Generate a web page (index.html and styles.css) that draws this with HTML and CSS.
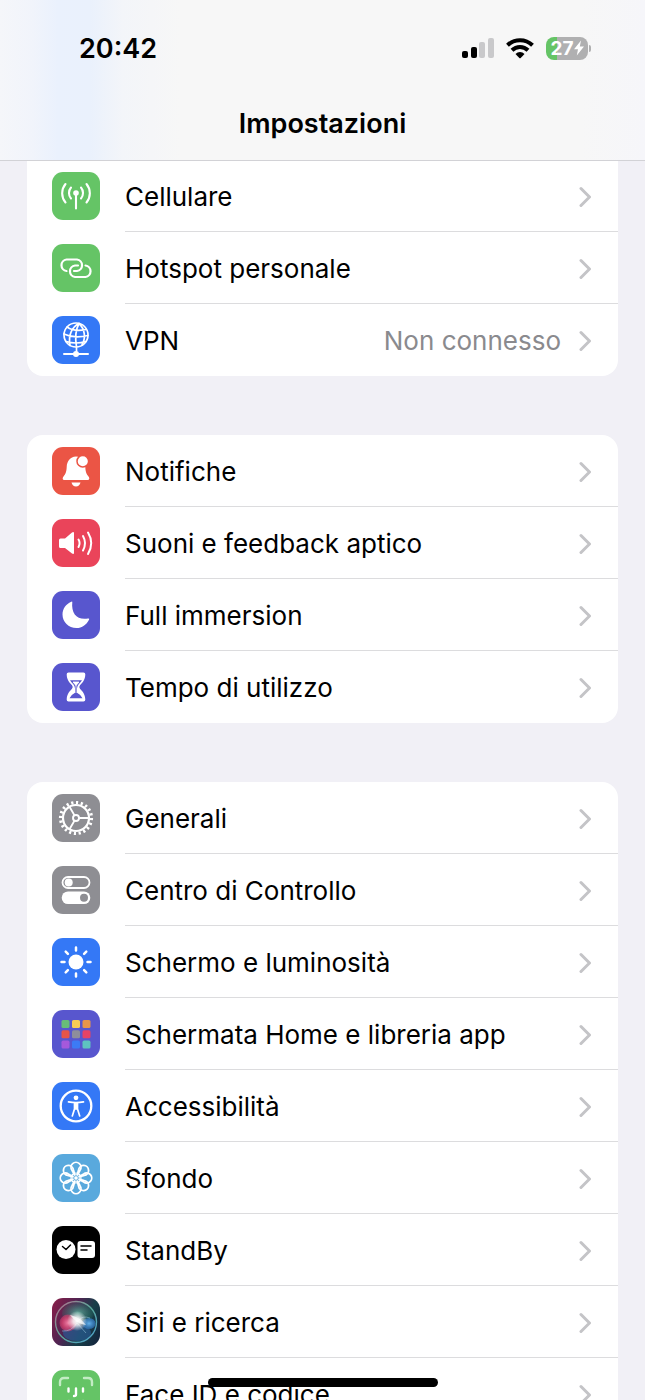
FILE: index.html
```html
<!DOCTYPE html>
<html lang="it">
<head>
  <meta charset="UTF-8">
  <meta name="viewport" content="width=device-width, initial-scale=1.0">
  <title>Impostazioni</title>
  <link rel="stylesheet" href="styles.css">
</head>
<body>
  <svg class="defs" aria-hidden="true">
    <symbol id="chevron" viewBox="0 0 13 22">
      <path d="M2 2.5 10.5 11 2 19.5" fill="none" stroke="currentColor" stroke-width="3" stroke-linecap="round" stroke-linejoin="round"/>
    </symbol>
  </svg>

  <div class="screen">
    <header class="top-bar">
      <div class="status">
        <time class="clock">20:42</time>
        <div class="indicators">
          <svg class="signal" viewBox="0 0 33 22" aria-hidden="true">
            <rect x="1" y="14" width="6" height="7" rx="2"/>
            <rect x="10" y="10" width="6" height="11" rx="2"/>
            <rect x="18" y="5" width="6" height="16" rx="2" fill="#c9c9cb"/>
            <rect x="27" y="1" width="6" height="20" rx="2" fill="#c9c9cb"/>
          </svg>
          <svg class="wifi" viewBox="0 0 28 22" aria-hidden="true">
            <g fill="none" stroke="#000" stroke-width="4">
              <path d="M1.5 8.2a18 18 0 0 1 25 0"/>
              <path d="M6 13.2a11.5 11.5 0 0 1 16 0"/>
            </g>
            <path d="M9.5 16.9a6.5 6.5 0 0 1 9 0L14.7 21q-.7.6-1.400 0z"/>
          </svg>
          <div class="battery">
            <span class="battery-level">27</span>
            <svg class="bolt" viewBox="0 0 10 16" aria-hidden="true"><path d="M7 .5 0 9.300H4L2.800 15.500 10 6.500H5.800z" fill="#fff"/></svg>
          </div>
        </div>
      </div>
      <h1 class="title">Impostazioni</h1>
    </header>

    <main class="settings">
      <nav class="group group-first">
        <a class="row" href="#cellulare">
          <svg class="icon green" viewBox="0 0 48 48" aria-hidden="true">
            <g fill="none" stroke="#fff" stroke-width="2.1" stroke-linecap="round">
              <path d="M24 21v15.500M19 15.500a8.500 8.500 0 0 0 0 11M29 15.500a8.500 8.500 0 0 1 0 11M13.500 12a14.500 14.500 0 0 0 0 18.500M34.500 12a14.500 14.500 0 0 1 0 18.500"/>
            </g>
            <circle cx="24" cy="21" r="2.800" fill="#fff"/>
          </svg>
          <span class="content"><span class="label">Cellulare</span><svg class="chevron"><use href="#chevron"/></svg></span>
        </a>
        <a class="row" href="#hotspot">
          <svg class="icon green" viewBox="0 0 48 48" aria-hidden="true">
            <g fill="none" stroke="#fff" stroke-width="2.2" stroke-linecap="round">
              <path d="M14.500 27a5.800 5.800 0 0 1 0-11.500H25a5.800 5.800 0 0 1 0 11.500h-3"/>
              <path d="M26 21.500h-3a5.800 5.800 0 0 0 0 11.500h10.500a5.800 5.800 0 0 0 0-11.500"/>
            </g>
          </svg>
          <span class="content"><span class="label">Hotspot personale</span><svg class="chevron"><use href="#chevron"/></svg></span>
        </a>
        <a class="row" href="#vpn">
          <svg class="icon blue" viewBox="0 0 48 48" aria-hidden="true">
            <g fill="none" stroke="#fff" stroke-width="1.700" stroke-linecap="round">
              <circle cx="24" cy="19" r="12"/>
              <path d="M27 7.500C20 11 16 19 18 29.500M27 7.500C24 13 23 22 24.500 31M27 7.500C33 13 34 22 30 29M15 11q7 5 19 2.500M12 18q10 5 24 1.500M14 25.500q10 3 20 0M24.500 31v4"/>
              <path d="M12 38h24" stroke-width="2"/>
            </g>
            <circle cx="24" cy="38" r="3" fill="#fff"/>
          </svg>
          <span class="content"><span class="label">VPN</span><span class="value">Non connesso</span><svg class="chevron"><use href="#chevron"/></svg></span>
        </a>
      </nav>

      <nav class="group">
        <a class="row" href="#notifiche">
          <svg class="icon red" viewBox="0 0 48 48" aria-hidden="true">
            <path d="M24 9.500c-6 .5-9 4.500-9.300 10.500-.2 5-1.200 7-3.200 9.500-1.500 2-.7 3.500 1 3.500h23c1.700 0 2.500-1.500 1-3.500-2-2.500-3-4.500-3.200-9.500C33 13.500 30 10 24 9.500z" fill="#fff"/>
            <path d="M19.500 35.500h9c-.7 2.500-2.300 4-4.500 4s-3.800-1.500-4.500-4z" fill="#fff"/>
            <circle cx="30.800" cy="14.200" r="5.800" fill="#fff" stroke="#eb5545" stroke-width="1.500"/>
          </svg>
          <span class="content"><span class="label">Notifiche</span><svg class="chevron"><use href="#chevron"/></svg></span>
        </a>
        <a class="row" href="#suoni">
          <svg class="icon pink" viewBox="0 0 48 48" aria-hidden="true">
            <path d="M8.500 19.500H13l7-6q2-1.200 2 .8v19.500q0 2-2 .8l-7-5.600H8.500Q7 29 7 27.500v-6.500q0-1.500 1.500-1.500z" fill="#fff"/>
            <g fill="none" stroke="#fff" stroke-width="2" stroke-linecap="round">
              <path d="M26.500 20.500q2.200 3.700 0 7.500M31 17q4 7 0 14.500M36 13.500q6.500 10.700 0 21.500"/>
            </g>
          </svg>
          <span class="content"><span class="label">Suoni e feedback aptico</span><svg class="chevron"><use href="#chevron"/></svg></span>
        </a>
        <a class="row" href="#full-immersion">
          <svg class="icon indigo" viewBox="0 0 48 48" aria-hidden="true">
            <path d="M20.300 11C19 23 25.500 29.500 36 27.500q1.700-.3 1 1.200C34.500 33.700 30 37 24.500 37 16.500 37 10.500 31 10.500 23.500c0-5.500 3.500-10.500 8.700-12.700q1.300-.5 1.100.2z" fill="#fff"/>
          </svg>
          <span class="content"><span class="label">Full immersion</span><svg class="chevron"><use href="#chevron"/></svg></span>
        </a>
        <a class="row" href="#tempo">
          <svg class="icon indigo" viewBox="0 0 48 48" aria-hidden="true">
            <path d="M16.500 9.500h15q1.800 0 1.800 1.800c0 5.600-3 8.600-5.300 11q-1.500 1.700 0 3.400c2.300 2.400 5.300 5.400 5.300 11q0 1.800-1.800 1.800h-15q-1.800 0-1.800-1.800c0-5.600 3-8.600 5.300-11q1.500-1.700 0-3.400c-2.300-2.400-5.300-5.400-5.300-11q0-1.800 1.800-1.800z" fill="#fff"/>
            <path d="M18 17.300h12q-1.200 2-3.300 4-1.700 2-1.700 4v4.500q4 2 5.500 5.500h-13q1.500-3.500 5.500-5.500v-4.500q0-2-1.700-4-2.100-2-3.300-4z" fill="#5856ce"/>
            <path d="M21 19h6L24 22.500zM24 21v9" fill="#fff" stroke="#fff" stroke-width=".8"/>
          </svg>
          <span class="content"><span class="label">Tempo di utilizzo</span><svg class="chevron"><use href="#chevron"/></svg></span>
        </a>
      </nav>

      <nav class="group">
        <a class="row" href="#generali">
          <svg class="icon gray" viewBox="0 0 48 48" aria-hidden="true">
            <g fill="none" stroke="#fff">
              <circle cx="24" cy="24" r="15.500" stroke-width="3.200" pathLength="40" stroke-dasharray=".9 1.100"/>
              <circle cx="24" cy="24" r="13" stroke-width="2.200"/>
              <circle cx="24" cy="24" r="3" stroke-width="1.900"/>
              <path d="M27 24h10M22.500 21.400 17.500 12.700M22.500 26.600 17.500 35.300" stroke-width="1.900"/>
            </g>
          </svg>
          <span class="content"><span class="label">Generali</span><svg class="chevron"><use href="#chevron"/></svg></span>
        </a>
        <a class="row" href="#centro-di-controllo">
          <svg class="icon gray" viewBox="0 0 48 48" aria-hidden="true">
            <rect x="10.500" y="11" width="27" height="11" rx="5.500" fill="none" stroke="#fff" stroke-width="1.800"/>
            <circle cx="16.700" cy="16.500" r="4" fill="#fff"/>
            <rect x="9.700" y="25.500" width="28.600" height="12.600" rx="6.300" fill="#fff"/>
            <circle cx="32" cy="31.800" r="4" fill="#8e8e93"/>
          </svg>
          <span class="content"><span class="label">Centro di Controllo</span><svg class="chevron"><use href="#chevron"/></svg></span>
        </a>
        <a class="row" href="#schermo">
          <svg class="icon blue" viewBox="0 0 48 48" aria-hidden="true">
            <circle cx="24" cy="24" r="7.500" fill="#fff"/>
            <path d="M24 9.500v3M24 35.500v3M9.500 24h3M35.500 24h3M13.700 13.700l2.200 2.200M32.100 32.100l2.200 2.200M13.700 34.300l2.200-2.200M32.100 15.900l2.200-2.200" stroke="#fff" stroke-width="2.500" stroke-linecap="round"/>
          </svg>
          <span class="content"><span class="label">Schermo e luminosità</span><svg class="chevron"><use href="#chevron"/></svg></span>
        </a>
        <a class="row" href="#schermata-home">
          <svg class="icon indigo" viewBox="0 0 48 48" aria-hidden="true">
            <rect x="9.500" y="10" width="8" height="8" rx="1.600" fill="#68bd78"/>
            <rect x="20" y="10" width="8" height="8" rx="1.600" fill="#f7ca54"/>
            <rect x="30.500" y="10" width="8" height="8" rx="1.600" fill="#e8964b"/>
            <rect x="9.500" y="20.300" width="8" height="8" rx="1.600" fill="#e75547"/>
            <rect x="20" y="20.300" width="8" height="8" rx="1.600" fill="#8e8e9b"/>
            <rect x="30.500" y="20.300" width="8" height="8" rx="1.600" fill="#e54365"/>
            <rect x="9.500" y="30.600" width="8" height="8" rx="1.600" fill="#a559db"/>
            <rect x="20" y="30.600" width="8" height="8" rx="1.600" fill="#3c7bf5"/>
            <rect x="30.500" y="30.600" width="8" height="8" rx="1.600" fill="#5ec3c0"/>
          </svg>
          <span class="content"><span class="label">Schermata Home e libreria app</span><svg class="chevron"><use href="#chevron"/></svg></span>
        </a>
        <a class="row" href="#accessibilita">
          <svg class="icon blue" viewBox="0 0 48 48" aria-hidden="true">
            <circle cx="24" cy="24" r="15.300" fill="none" stroke="#fff" stroke-width="2.300"/>
            <circle cx="24" cy="15.800" r="2.400" fill="#fff"/>
            <path d="M16.500 19.800q7.500 1.400 15 0M22.500 21v6l-2.200 7M25.500 21v6l2.200 7" fill="none" stroke="#fff" stroke-width="1.700" stroke-linecap="round" stroke-linejoin="round"/>
            <path d="M22 20.500h4v6.500l-2 1-2-1z" fill="#fff"/>
          </svg>
          <span class="content"><span class="label">Accessibilità</span><svg class="chevron"><use href="#chevron"/></svg></span>
        </a>
        <a class="row" href="#sfondo">
          <svg class="icon sky" viewBox="0 0 48 48" aria-hidden="true">
            <defs>
              <path id="petal" d="M24 23.500 20 16.300a5 5 0 1 1 8 0z"/>
            </defs>
            <g fill="none" stroke="#fff" stroke-width="1.800" stroke-linejoin="round">
              <use href="#petal"/>
              <use href="#petal" transform="rotate(45 24 24)"/>
              <use href="#petal" transform="rotate(90 24 24)"/>
              <use href="#petal" transform="rotate(135 24 24)"/>
              <use href="#petal" transform="rotate(180 24 24)"/>
              <use href="#petal" transform="rotate(225 24 24)"/>
              <use href="#petal" transform="rotate(270 24 24)"/>
              <use href="#petal" transform="rotate(315 24 24)"/>
              <circle cx="24" cy="24" r="5" stroke-width="1.200"/>
            </g>
            <circle cx="24" cy="24" r="2.300" fill="#fff" stroke="#59a9dd"/>
          </svg>
          <span class="content"><span class="label">Sfondo</span><svg class="chevron"><use href="#chevron"/></svg></span>
        </a>
        <a class="row" href="#standby">
          <svg class="icon black" viewBox="0 0 48 48" aria-hidden="true">
            <circle cx="14" cy="23.500" r="9.500" fill="#fff"/>
            <rect x="25.500" y="15" width="17.500" height="17" rx="3" fill="#fff"/>
            <path d="M10.500 20.500l3.500 3 4.500-4.500M29 20h10M29 24h6" fill="none" stroke="#000" stroke-width="1.500" stroke-linecap="round" stroke-linejoin="round"/>
          </svg>
          <span class="content"><span class="label">StandBy</span><svg class="chevron"><use href="#chevron"/></svg></span>
        </a>
        <a class="row" href="#siri">
          <svg class="icon siri" viewBox="0 0 48 48" aria-hidden="true">
            <defs>
              <linearGradient id="siri-ring" x1="0" y1="0" x2="1" y2="1">
                <stop offset="0" stop-color="#b56c8a"/>
                <stop offset=".5" stop-color="#5ba99a"/>
                <stop offset="1" stop-color="#4c9fd0"/>
              </linearGradient>
              <radialGradient id="siri-pink">
                <stop offset="0" stop-color="#ee7fa5"/>
                <stop offset=".7" stop-color="#d9406f" stop-opacity=".8"/>
                <stop offset="1" stop-color="#d9406f" stop-opacity=".5"/>
              </radialGradient>
              <radialGradient id="siri-green">
                <stop offset="0" stop-color="#5fae9b" stop-opacity=".9"/>
                <stop offset="1" stop-color="#2c7a69" stop-opacity=".2"/>
              </radialGradient>
              <radialGradient id="siri-blue">
                <stop offset="0" stop-color="#63b0ea"/>
                <stop offset="1" stop-color="#2f74bd" stop-opacity=".7"/>
              </radialGradient>
              <radialGradient id="siri-glow">
                <stop offset="0" stop-color="#fff"/>
                <stop offset=".4" stop-color="#fff" stop-opacity=".8"/>
                <stop offset="1" stop-color="#fff" stop-opacity="0"/>
              </radialGradient>
            </defs>
            <ellipse cx="26" cy="15" rx="16" ry="11" fill="url(#siri-green)"/>
            <ellipse cx="25" cy="35" rx="14" ry="8" fill="#2b5f9e" opacity=".6"/>
            <circle cx="16" cy="25" r="8.500" fill="url(#siri-pink)"/>
            <ellipse cx="37" cy="25.500" rx="6.500" ry="5.500" fill="url(#siri-blue)"/>
            <path d="M10 33q9 1 15-8l9 10M26 23q4-6 12-3" fill="none" stroke="#9ecbe6" opacity=".5"/>
            <circle cx="25" cy="23" r="10" fill="url(#siri-glow)"/>
            <path d="M18 17q10 2 16 10-9-1-16-10z" fill="#fff" opacity=".7"/>
            <circle cx="24" cy="24" r="20.500" fill="none" stroke="url(#siri-ring)" stroke-width="1.400"/>
          </svg>
          <span class="content"><span class="label">Siri e ricerca</span><svg class="chevron"><use href="#chevron"/></svg></span>
        </a>
        <a class="row" href="#face-id">
          <svg class="icon green" viewBox="0 0 48 48" aria-hidden="true">
            <g fill="none" stroke="#fff" stroke-width="2.400" stroke-linecap="round">
              <path d="M8 15v-3q0-4 4-4h4M32 8h4q4 0 4 4v3M8 33v3q0 4 4 4h4M32 40h4q4 0 4-4v-3" stroke="#c3ecc4"/>
              <path d="M16.500 18.500v3M31 18.500v3M24 18.500v6q0 1.500-2 1.500M17 31q7 5 14 0"/>
            </g>
          </svg>
          <span class="content"><span class="label">Face ID e codice</span><svg class="chevron"><use href="#chevron"/></svg></span>
        </a>
      </nav>
    </main>
    <div class="home-indicator"></div>
  </div>
</body>
</html>
```
FILE: styles.css
```css
* {
  box-sizing: border-box;
}

body {
  margin: 0;
  background: #f1f0f6;
  color: #000;
  font-family: Inter, "Liberation Sans", sans-serif;
  font-size: 26px;
}

.defs {
  position: absolute;
  width: 0;
  height: 0;
}

.screen {
  display: flex;
  flex-direction: column;
  height: 100vh;
  overflow: hidden;
}

/* Status bar and title, the list scrolls underneath */
.top-bar {
  z-index: 1;
  flex: none;
  margin-bottom: -1px;
  padding: 28px 54px 8px 79px;
  border-bottom: 1px solid #d2d2d6;
  background: linear-gradient(90deg, #f5f6fa 0%, #f1f4fb 5%, #eaf1fd 9%, #eaf1fc 14%, #f3f5f9 19%, #f7f7f7 28%, #f7f7f7 90%, #f6f6fa 100%);
}

.status {
  display: flex;
  align-items: center;
  justify-content: space-between;
  height: 40px;
}

.clock {
  font-size: 27px;
  font-weight: 600;
}

.indicators {
  display: flex;
  align-items: center;
  gap: 12px;
}

.signal {
  width: 33px;
  height: 22px;
}

.wifi {
  width: 28px;
  height: 22px;
}

.battery {
  position: relative;
  display: flex;
  align-items: center;
  justify-content: center;
  width: 42px;
  height: 23px;
  margin-right: 3px;
  border-radius: 8px;
  background: linear-gradient(90deg, #65c466 27%, #b0b0b1 27%);
  color: #fff;
}

.battery::after {
  content: "";
  position: absolute;
  right: -3px;
  top: 8px;
  width: 2px;
  height: 7px;
  border-radius: 0 3px 3px 0;
  background: #b0b0b1;
}

.battery-level {
  font-size: 19px;
  font-weight: 700;
  line-height: 23px;
}

.bolt {
  width: 10px;
  height: 16px;
}

.title {
  margin: 28px 0 0;
  padding-right: 25px;
  font-size: 27px;
  font-weight: 600;
  line-height: 56px;
  text-align: center;
}

/* Grouped list */
.settings {
  flex: 1;
  min-height: 0;
  padding: 0 27px;
  overflow-y: auto;
  scrollbar-width: none;
}

.group {
  margin-bottom: 59px;
  overflow: hidden;
  border-radius: 16px;
  background: #fff;
}

.group-first {
  border-radius: 0 0 16px 16px;
}

.row {
  display: flex;
  align-items: center;
  gap: 25px;
  height: 72px;
  padding-left: 25px;
  color: inherit;
  text-decoration: none;
}

.icon {
  flex: none;
  width: 48px;
  height: 48px;
  border-radius: 11px;
}

.content {
  display: flex;
  flex: 1;
  align-items: center;
  height: 100%;
  padding: 2px 26px 0 0;
  border-bottom: 1px solid #dcdcde;
}

.row:last-child .content {
  border-bottom-color: transparent;
}

.label {
  flex: 1;
  white-space: nowrap;
}

.value {
  color: #8a8a8e;
}

.chevron {
  flex: none;
  width: 13px;
  height: 22px;
  margin-left: 18px;
  color: #c4c4c7;
}

.green {
  background: #65c466;
}

.blue {
  background: #3478f6;
}

.red {
  background: #eb5545;
}

.pink {
  background: #ea445a;
}

.indigo {
  background: #5856ce;
}

.gray {
  background: #8e8e93;
}

.sky {
  background: #59a9dd;
}

.black {
  background: #000;
}

.siri {
  background: linear-gradient(115deg, #8c1d48 0%, #4d2452 40%, #173f48 65%, #14213c 100%);
}

.home-indicator {
  position: fixed;
  bottom: 13px;
  left: 50%;
  width: 230px;
  height: 9px;
  border-radius: 5px;
  background: #000;
  transform: translateX(-50%);
}
```
